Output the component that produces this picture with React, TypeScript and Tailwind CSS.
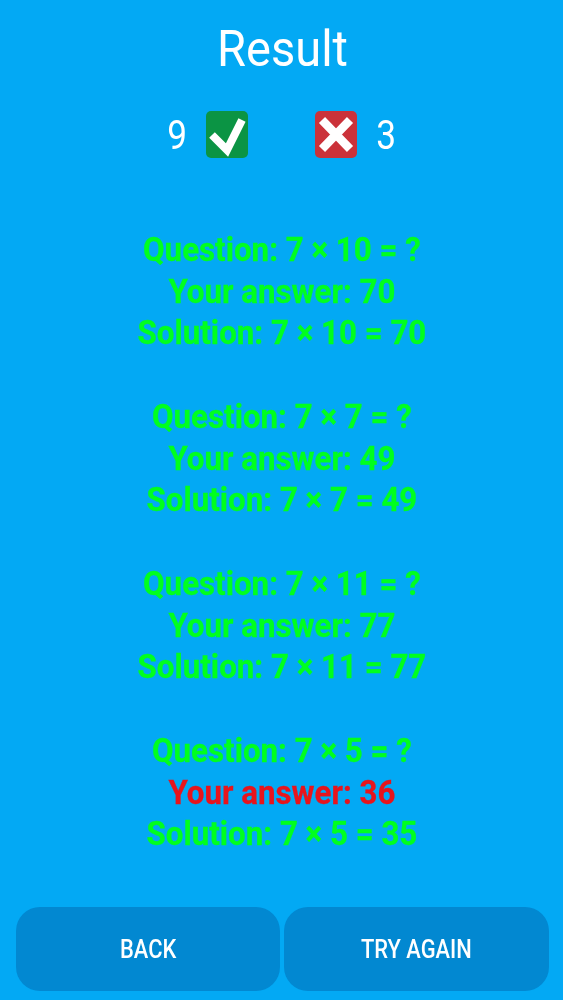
const G = "text-[#00ff1e]";
const R = "text-[#e8141c]";

const blocks = [
  { q: "Question: 7 × 10 = ?", a: "Your answer: 70", s: "Solution: 7 × 10 = 70", ok: true },
  { q: "Question: 7 × 7 = ?", a: "Your answer: 49", s: "Solution: 7 × 7 = 49", ok: true },
  { q: "Question: 7 × 11 = ?", a: "Your answer: 77", s: "Solution: 7 × 11 = 77", ok: true },
  { q: "Question: 7 × 5 = ?", a: "Your answer: 36", s: "Solution: 7 × 5 = 35", ok: false },
];

function Check() {
  return (
    <div className="w-[42px] h-[47px] rounded-[5px] bg-[#0b9444] flex items-center justify-center blur-[0.5px]">
      <svg width="42" height="47" viewBox="0 0 42 47">
        <path d="M6 24 L21 39 L36 9" fill="none" stroke="#fff" strokeWidth="8" />
      </svg>
    </div>
  );
}

function Cross() {
  return (
    <div className="w-[42px] h-[47px] rounded-[5px] bg-[#cb323a] flex items-center justify-center blur-[0.5px]">
      <svg width="42" height="47" viewBox="0 0 42 47">
        <path d="M7 9 L35 38 M35 9 L7 38" fill="none" stroke="#fff" strokeWidth="8.5" />
      </svg>
    </div>
  );
}

export default function App() {
  return (
    <div className="w-[563px] h-[1000px] bg-[#03a9f4] flex flex-col items-center font-['Roboto',sans-serif] overflow-hidden">
      <h1 className="mt-[18px] pl-[2px] text-[50px] leading-[62px] text-white font-normal scale-x-[0.94]">Result</h1>
      <div className="mt-[31px] flex items-center text-white">
        <span className="h-[47px] pt-[2px] leading-[45px] text-[40px] scale-x-[0.88]">9</span>
        <div className="ml-[18px]"><Check /></div>
        <div className="ml-[67px]"><Cross /></div>
        <span className="ml-[18px] h-[47px] pt-[2px] leading-[45px] text-[40px] scale-x-[0.88]">3</span>
      </div>
      <div className="mt-[71px] flex flex-col gap-[41.73px] text-center text-[34px] leading-[41.73px] font-bold scale-x-[0.92] [-webkit-text-stroke:0.3px_currentColor]">
        {blocks.map((b) => (
          <div key={b.q} className={G}>
            <div>{b.q}</div>
            <div className={b.ok ? G : R}>{b.a}</div>
            <div>{b.s}</div>
          </div>
        ))}
      </div>
      <div className="mt-auto mb-[9px] w-full pl-[16px] flex gap-[4px]">
        <button className="w-[264px] h-[84px] pt-[2px] rounded-[24px] bg-[#0288d1] text-white"><span className="inline-block text-[25px] font-medium scale-x-[0.875]">BACK</span></button>
        <button className="w-[265px] h-[84px] pt-[2px] rounded-[24px] bg-[#0288d1] text-white"><span className="inline-block text-[25px] font-medium scale-x-[0.875]">TRY AGAIN</span></button>
      </div>
    </div>
  );
}
